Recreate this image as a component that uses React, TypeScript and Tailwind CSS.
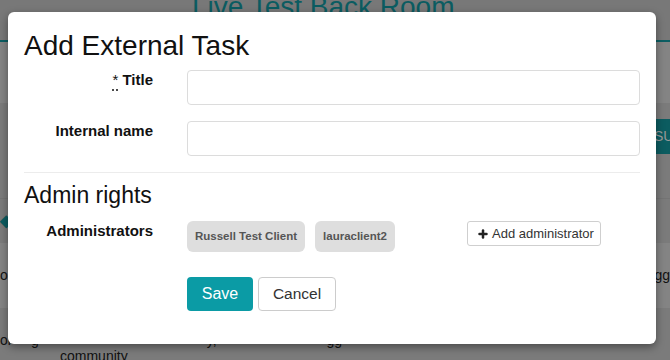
import { Plus } from 'lucide-react'

const font = { fontFamily: '"Liberation Sans", Arial, sans-serif' }

function Backdrop() {
  return (
    <div className="flex h-full flex-col text-[#111]">
      <div className="h-[42px] shrink-0 overflow-hidden border-b-2 border-[#0c5e63] bg-[#787878]">
        <h1 className="-mt-[7px] pl-[192px] text-[28px] leading-[28px] text-[#0b5c61]">Live Test Back Room</h1>
      </div>
      <div className="h-[61px] shrink-0 bg-[#848484]" />
      <div className="flex h-[95px] shrink-0 flex-col items-end bg-[#7b7b7b] pt-[16px]">
        <div className="flex h-[35px] w-[18px] items-center bg-[#0c5c60] pl-[2px] text-[14px] text-[#9a9a9a]">SU</div>
      </div>
      <div className="flex h-[45px] shrink-0 items-center border-t border-[#747474] bg-[#7b7b7b]">
        <span className="text-[16px] font-bold text-[#0c5c60]">◆</span>
      </div>
      <div className="flex h-[65px] shrink-0 items-center justify-between bg-[#848484] text-[14px]">
        <span>ol</span>
        <span>gg</span>
      </div>
      <div className="flex-1 bg-[#7b7b7b] text-[14px] leading-[16px]">
        <div className="flex pt-[24px]">
          <span>ol</span>
          <span className="ml-[20px]">g</span>
          <span className="ml-[168px]">y,</span>
          <span className="ml-[110px]">gg</span>
        </div>
        <div className="pl-[60px]">community</div>
      </div>
    </div>
  )
}

export default function App() {
  return (
    <div className="relative h-[360px] w-[670px] overflow-hidden" style={font}>
      <Backdrop />

      <div className="absolute left-[8px] top-[12px] h-[332px] w-[648px] rounded-[6px] bg-white px-4 pt-[18px] shadow-[0_3px_9px_rgba(0,0,0,0.4)]">
        <h2 className="text-[28px] leading-[31px] text-[#111]">Add External Task</h2>

        <form className="mt-[9px]" onSubmit={(event) => event.preventDefault()}>
          <div className="grid grid-cols-[129px_1fr] gap-x-[34px] gap-y-[16px]">
            <label className="text-right text-[15px] font-bold leading-5 text-[#111]">
              <span className="font-normal underline decoration-dotted underline-offset-[5px]">*</span> Title
            </label>
            <input className="h-[35px] w-full rounded-[4px] border border-[#dcdcdc] px-3 outline-none" />

            <label className="text-right text-[15px] font-bold leading-5 text-[#111]">Internal name</label>
            <input className="h-[35px] w-full rounded-[4px] border border-[#dcdcdc] px-3 outline-none" />
          </div>

          <hr className="mt-[16px] border-t border-[#ececec]" />

          <h3 className="mt-[9px] text-[23px] leading-[26px] text-[#111]">Admin rights</h3>

          <div className="mt-[13px] grid grid-cols-[129px_1fr] gap-x-[34px]">
            <div className="text-right text-[15px] font-bold leading-5 text-[#111]">Administrators</div>
            <div>
              <div className="flex items-start">
                <div className="flex w-[280px] gap-[10px]">
                  <span className="flex h-[31px] items-center rounded-[6px] bg-[#dedede] px-2 text-[11.5px] font-bold text-[#555]">
                    Russell Test Client
                  </span>
                  <span className="flex h-[31px] items-center rounded-[6px] bg-[#dedede] px-2 text-[11.5px] font-bold text-[#555]">
                    lauraclient2
                  </span>
                </div>
                <button
                  type="button"
                  className="flex h-[25px] w-[134px] items-center gap-[3px] rounded-[3px] border border-[#cfcfcf] pl-[9px] text-[13px] text-[#333]"
                >
                  <Plus size={12} strokeWidth={5} className="text-[#222]" />
                  Add administrator
                </button>
              </div>

              <div className="mt-[25px] flex gap-[5px]">
                <button type="submit" className="h-[34px] w-[66px] rounded-[4px] bg-[#0b9ba5] text-[16px] text-white">
                  Save
                </button>
                <button type="button" className="h-[34px] w-[78px] rounded-[4px] border border-[#cccccc] text-[15.5px] text-[#333]">
                  Cancel
                </button>
              </div>
            </div>
          </div>
        </form>
      </div>
    </div>
  )
}
